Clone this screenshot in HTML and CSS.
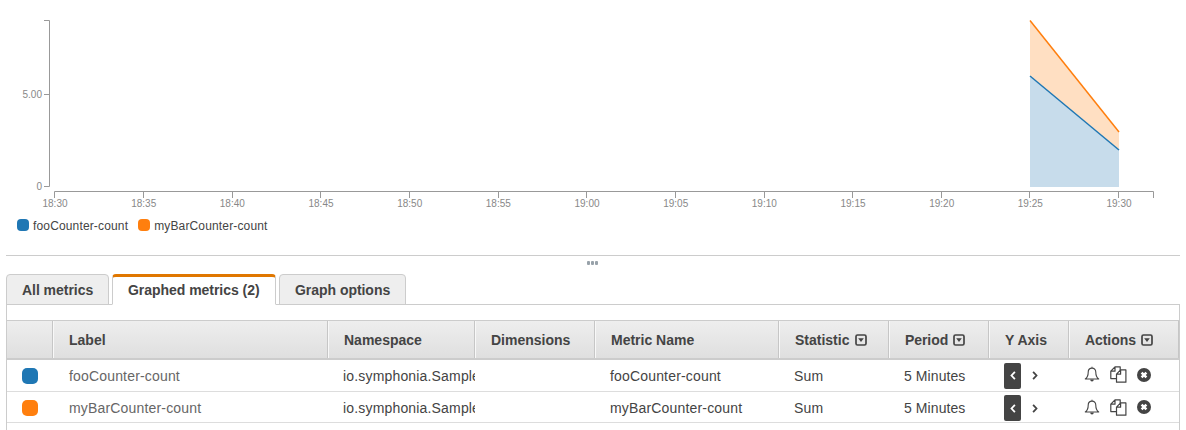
FILE: index.html
```html
<!DOCTYPE html>
<html lang="en">
<head>
<meta charset="utf-8">
<title>Metrics</title>
<link rel="stylesheet" href="styles.css">
</head>
<body>
<svg class="defs" width="0" height="0" aria-hidden="true">
  <symbol id="menu" viewBox="0 0 12 12"><rect x="1" y="1" width="10" height="10" rx="1.5" fill="none" stroke="#444" stroke-width="1.7"/><path d="M3.2 4.200h5.600L6 8z" fill="#444"/></symbol>
  <symbol id="bell" viewBox="0 0 16 17"><path d="M8 .8v1.3M8 2.1C5.4 2.1 4.2 4 4.2 6.2c0 3.600-.7 5.300-2.900 6.800h13.400c-2.200-1.500-2.900-3.200-2.900-6.800C11.800 4 10.600 2.100 8 2.100z" fill="none" stroke="#444" stroke-width="1.100" stroke-linejoin="round"/><path d="M6.200 13.500h3.600a1.800 2 0 0 1-3.600 0z" fill="#444"/></symbol>
  <symbol id="copy" viewBox="0 0 17 17"><g fill="none" stroke="#444" stroke-width="1.200" stroke-linejoin="round"><path d="M6.300 12.600H.8V5.200L5 .8h5.200v3.400M.8 5.200H5V.8"/><path d="M6.500 8.200L10.600 3.900h5.300v12.300H6.500zM6.500 8.200h4.100V3.900"/></g></symbol>
  <symbol id="close" viewBox="0 0 14 14"><circle cx="7" cy="7" r="7" fill="#444"/><path d="M4.600 4.600l4.800 4.800M9.400 4.600L4.600 9.400" stroke="#fff" stroke-width="2.500"/></symbol>
  <symbol id="left" viewBox="0 0 6 9"><path d="M4.900 .9L1.500 4.500l3.400 3.600" fill="none" stroke="currentColor" stroke-width="1.800"/></symbol>
  <symbol id="right" viewBox="0 0 6 9"><path d="M1.100 .9l3.400 3.600-3.400 3.600" fill="none" stroke="currentColor" stroke-width="1.800"/></symbol>
</svg>
<svg class="chart" width="1186" height="214" viewBox="0 0 1186 214">
  <path class="area-orange" d="M1030 20.500L1119 131.500V150L1030 76z"/>
  <path class="area-blue" d="M1030 76L1119 150V187H1030z"/>
  <path class="line-orange" d="M1030 20.500L1119 132"/>
  <path class="line-blue" d="M1030 76L1119 150"/>
  <path class="axis" d="M44 20.500H49.500V186.500H44M44 94.500H49.500"/>
  <path class="axis" d="M54.500 198V191.500H1153.500V198M143.500 192v6M232.500 192v6M320.500 192v6M409.500 192v6M498.500 192v6M586.500 192v6M675.500 192v6M764.500 192v6M852.500 192v6M941.500 192v6M1029.500 192v6M1118.500 192v6"/>
  <g class="tick end"><text x="42" y="98">5.00</text><text x="42" y="190">0</text></g>
  <g class="tick mid"><text x="55" y="207">18:30</text><text x="143.700" y="207">18:35</text><text x="232.300" y="207">18:40</text><text x="321" y="207">18:45</text><text x="409.700" y="207">18:50</text><text x="498.300" y="207">18:55</text><text x="587" y="207">19:00</text><text x="675.700" y="207">19:05</text><text x="764.300" y="207">19:10</text><text x="853" y="207">19:15</text><text x="941.700" y="207">19:20</text><text x="1030.300" y="207">19:25</text><text x="1119" y="207">19:30</text></g>
</svg>
<div class="legend">
  <span class="key"><i class="dot blue"></i>fooCounter-count</span>
  <span class="key"><i class="dot orange"></i>myBarCounter-count</span>
</div>
<div class="splitter"><i></i><i></i><i></i></div>
<nav class="tabs">
  <a class="tab all">All metrics</a>
  <a class="tab active">Graphed metrics (2)</a>
  <a class="tab options">Graph options</a>
</nav>
<main class="panel">
  <div class="row head">
    <div></div><div>Label</div><div>Namespace</div><div>Dimensions</div><div>Metric Name</div>
    <div>Statistic<svg class="menu"><use href="#menu"/></svg></div>
    <div class="tight">Period<svg class="menu"><use href="#menu"/></svg></div>
    <div>Y Axis</div>
    <div class="tight">Actions<svg class="menu"><use href="#menu"/></svg></div>
  </div>
  <div class="row item">
    <div class="swatch"><i class="dot blue"></i></div><div class="label">fooCounter-count</div><div>io.symphonia.Sample</div><div></div><div>fooCounter-count</div><div>Sum</div><div class="period">5 Minutes</div>
    <div class="yaxis"><span class="side on"><svg><use href="#left"/></svg></span><span class="side"><svg><use href="#right"/></svg></span></div>
    <div class="actions"><svg class="bell"><use href="#bell"/></svg><svg class="copy"><use href="#copy"/></svg><svg class="close"><use href="#close"/></svg></div>
  </div>
  <div class="row item last">
    <div class="swatch"><i class="dot orange"></i></div><div class="label">myBarCounter-count</div><div>io.symphonia.Sample</div><div></div><div>myBarCounter-count</div><div>Sum</div><div class="period">5 Minutes</div>
    <div class="yaxis"><span class="side on"><svg><use href="#left"/></svg></span><span class="side"><svg><use href="#right"/></svg></span></div>
    <div class="actions"><svg class="bell"><use href="#bell"/></svg><svg class="copy"><use href="#copy"/></svg><svg class="close"><use href="#close"/></svg></div>
  </div>
</main>
</body>
</html>
```
FILE: styles.css
```css
* { box-sizing: border-box; }
body { margin: 0; height: 430px; overflow: hidden; display: flex; flex-direction: column; background: #fff; color: #444; font: 14px/20px "Liberation Sans", Arial, sans-serif; }
.defs { position: absolute; }
.chart { display: block; flex: none; }
.axis { fill: none; stroke: #999; }
.area-orange { fill: #ffdfc2; }
.area-blue { fill: #c7dceb; }
.line-orange, .line-blue { fill: none; stroke-width: 1.5; }
.line-orange { stroke: #ff7f0e; }
.line-blue { stroke: #1f77b4; }
.tick { font-size: 10px; fill: #888; }
.end { text-anchor: end; }
.mid { text-anchor: middle; }
.dot { display: block; width: 12px; height: 12px; border-radius: 4px; }
.blue { background: #1f77b4; }
.orange { background: #ff7f0e; }
.legend { display: flex; gap: 10px; height: 41px; padding: 5px 17px 0; font-size: 12px; line-height: 14px; letter-spacing: 0.15px; flex: none; }
.key { display: flex; gap: 4px; height: 14px; }
.splitter { display: flex; justify-content: center; gap: 1px; height: 19px; margin: 0 6px; padding: 5px 1px 0 0; border-top: 1px solid #ccc; flex: none; }
.splitter i { width: 3px; height: 4px; border-radius: 1px; background: #98a2aa; }
.tabs { display: flex; gap: 3px; height: 31px; padding-left: 6px; flex: none; }
.tab { height: 31px; padding: 5px 0 0 15px; border: 1px solid #ccc; border-radius: 4px 4px 0 0; background: #eee; font-weight: bold; letter-spacing: -0.04px; white-space: nowrap; }
.all { width: 103px; }
.active { width: 164px; padding-top: 3px; border-top: 3px solid #e07700; border-bottom-color: #fff; background: #fff; z-index: 1; }
.options { width: 127px; }
.panel { height: 126px; width: 1174px; margin: -1px 0 0 6px; padding-top: 15px; border: 1px solid #ccc; border-bottom: 0; flex: none; }
.row { display: grid; grid-template-columns: 46px 275px 147px 120px 184px 110px 100px 80px 110px; }
.row > div { white-space: nowrap; overflow: hidden; display: flex; align-items: center; padding-left: 15px; }
.head { height: 40px; border-top: 1px solid #ccc; border-bottom: 2px solid #ccc; background: linear-gradient(#eee, #dfdfdf); font-weight: bold; }
.head > div { border-right: 1px solid #c6c6c6; border-left: 1px solid #f8f8f8; }
.head > div:first-child { border-left: 0; }
.head > .tight { letter-spacing: -0.07px; }
.menu { width: 12px; height: 12px; margin-left: 6px; }
.tight .menu { margin-left: 5px; }
.item { height: 32px; border-bottom: 1px solid #ddd; letter-spacing: 0.17px; }
.item > .label { color: #666; padding-left: 16px; }
.item > .period { letter-spacing: 0.08px; }
.last { height: 31px; }
.last > div { height: 32px; }
.swatch .dot { width: 16px; height: 16px; border-radius: 5px; }
.side { display: flex; align-items: center; justify-content: center; width: 17px; height: 26px; border-radius: 2px; margin-right: 5px; }
.on { background: #444; color: #fff; }
.side svg { width: 6px; height: 9px; }
.item > .actions { padding-bottom: 2px; }
.bell { width: 16px; height: 17px; }
.copy { width: 17px; height: 17px; margin-left: 10px; }
.close { width: 14px; height: 14px; margin-left: 10px; }
```
